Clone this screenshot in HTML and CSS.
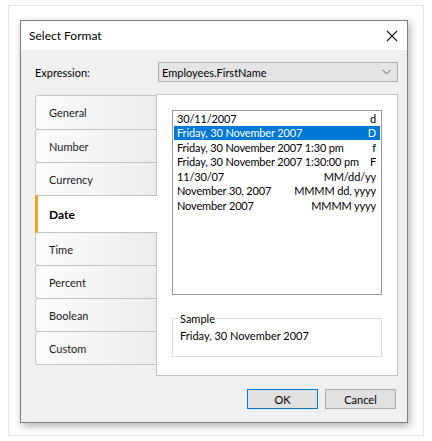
FILE: index.html
```html
<!DOCTYPE html>
<html>
<head>
<meta charset="utf-8">
<link rel="stylesheet" href="styles.css">
</head>
<body>
<div class="frame">
  <div class="dialog">
    <div class="titlebar">
      <span class="title">Select Format</span>
      <svg class="close" width="12" height="12" viewBox="0 0 12 12"><path d="M1 1 L11 11 M11 1 L1 11" stroke="#1a1a1a" stroke-width="1.1" fill="none"/></svg>
    </div>
    <div class="body">
      <div class="expr-row">
        <span class="label">Expression:</span>
        <div class="combo">
          <span>Employees.FirstName</span>
          <svg class="chev" width="9" height="6" viewBox="0 0 9 6"><path d="M0.5 0.8 L4.5 4.8 L8.5 0.8" stroke="#606060" stroke-width="1" fill="none"/></svg>
        </div>
      </div>
      <div class="tabs-area">
        <div class="tabs">
          <div class="tab">General</div>
          <div class="tab">Number</div>
          <div class="tab">Currency</div>
          <div class="tab active">Date</div>
          <div class="tab">Time</div>
          <div class="tab">Percent</div>
          <div class="tab">Boolean</div>
          <div class="tab">Custom</div>
        </div>
        <div class="panel">
          <div class="list">
            <div class="row"><span>30/11/2007</span><span>d</span></div>
            <div class="row sel"><span>Friday, 30 November 2007</span><span>D</span></div>
            <div class="row"><span>Friday, 30 November 2007 1:30 pm</span><span>f</span></div>
            <div class="row"><span>Friday, 30 November 2007 1:30:00 pm</span><span>F</span></div>
            <div class="row"><span>11/30/07</span><span>MM/dd/yy</span></div>
            <div class="row"><span>November 30, 2007</span><span>MMMM dd, yyyy</span></div>
            <div class="row"><span>November 2007</span><span>MMMM yyyy</span></div>
          </div>
          <fieldset class="sample">
            <legend>Sample</legend>
            <div class="sample-text">Friday, 30 November 2007</div>
          </fieldset>
        </div>
      </div>
      <div class="buttons">
        <button class="btn default">OK</button>
        <button class="btn">Cancel</button>
      </div>
    </div>
  </div>
</div>
</body>
</html>
```
FILE: styles.css
```css
* { box-sizing: border-box; }
html, body { margin: 0; padding: 0; background: #fff; }
body {
  font-family: Lato, "Noto Sans", sans-serif;
  font-size: 11px;
  color: #1a1a1a;
}
.frame {
  margin: 5px 8px;
  width: 416px;
  height: 431px;
  border: 1px solid #e6e6e6;
  padding: 14px 0 0 11px;
}
.dialog {
  width: 388px;
  height: 403px;
  border: 1px solid #7d7d7d;
  background: #f0f0f0;
  box-shadow: 2px 3px 8px rgba(0,0,0,0.3);
  display: flex;
  flex-direction: column;
}
.titlebar {
  height: 29px;
  background: #fff;
  display: flex;
  align-items: center;
  padding: 0 9px 0 8px;
  justify-content: space-between;
}
.title { font-size: 12px; color: #000; }
.close { display: block; }
.body {
  flex: 1;
  padding: 12px 9px 0 14px;
  display: flex;
  flex-direction: column;
}
.expr-row {
  height: 20px;
  display: flex;
  align-items: center;
}
.label { color: #000; }
.combo {
  margin-left: auto;
  width: 240px;
  height: 20px;
  border: 1px solid #adadad;
  background: #e5e5e5;
  display: flex;
  align-items: center;
  padding: 0 6px 0 3px;
  justify-content: space-between;
  color: #000;
}
.chev { display: block; }
.tabs-area {
  margin-top: 12px;
  display: flex;
  height: 282px;
}
.tabs {
  width: 122px;
  padding-top: 1px;
  display: flex;
  flex-direction: column;
  position: relative;
  z-index: 1;
}
.tab {
  height: 34px;
  margin-top: -1px;
  border: 1px solid #c4c4c4;
  border-radius: 3px 0 0 3px;
  background: linear-gradient(to right, #fcfcfc, #ededed);
  display: flex;
  align-items: center;
  padding-left: 13px;
  color: #1a1a1a;
}
.tab:first-child { margin-top: 0; height: 35px; }
.tab.active {
  height: 38px;
  background: #fff;
  border-right: none;
  border-left: 3px solid #f7a41d;
  border-radius: 0;
  margin-right: -1px;
  font-weight: bold;
  font-size: 12px;
  padding-left: 11px;
  color: #000;
}
.panel {
  flex: 1;
  margin-left: -1px;
  background: #fff;
  border: 1px solid #c4c4c4;
  padding: 15px 15px 0 15px;
}
.list {
  height: 185px;
  border: 1px solid #9a9a9a;
  padding: 0 1px;
}
.row {
  height: 14.5px;
  display: flex;
  justify-content: space-between;
  align-items: center;
  padding: 0 4px 0 3px;
  color: #000;
  white-space: nowrap;
  letter-spacing: -0.15px;
}
.row.sel { background: #0078d7; color: #fff; }
.sample {
  margin: 17px 0 0 0;
  border: 1px solid #dcdcdc;
  padding: 4px 7px 9px 7px;
  height: 45px;
}
.sample legend {
  padding: 0 1px;
  margin-left: -1px;
  color: #000;
}
.sample-text { color: #000; }
.buttons {
  margin-top: 13px;
  display: flex;
  justify-content: flex-end;
  gap: 7px;
  padding-right: 2px;
}
.btn {
  width: 71px;
  height: 20px;
  border: 1px solid #adadad;
  background: #e1e1e1;
  font-family: inherit;
  font-size: 11px;
  color: #000;
  padding: 0;
}
.btn.default { border: 1.5px solid #0078d7; }
```
